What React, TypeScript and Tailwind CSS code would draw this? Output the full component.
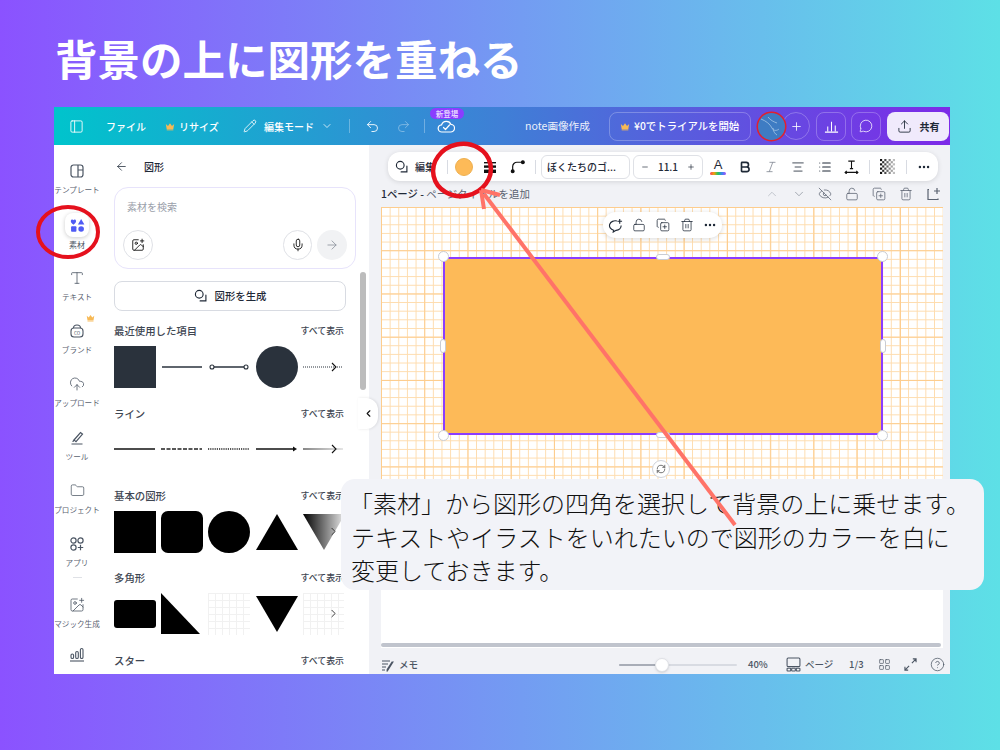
import React from "react";
import {
  PanelLeft, Pencil, ChevronDown, ChevronUp, ChevronLeft, ChevronRight, Undo2, Redo2, Plus, MessageCircle, Upload, ArrowLeft, ArrowRight,
  ImagePlus, Mic, Type, CloudUpload, Folder, Trash2, LockOpen, CopyPlus, Ellipsis, EyeOff, RefreshCw, AlignCenter, List, Bold, Italic,
  CircleHelp, LayoutGrid, Minus,
} from "lucide-react";

const Crown = ({ className = "" }: { className?: string }) => (
  <svg viewBox="0 0 12 10" className={className}>
    <path d="M1 2l2.6 2.4L6 1l2.4 3.4L11 2l-1 6H2z" fill="#f7b955" />
    <rect x="2" y="8.4" width="8" height="1.2" fill="#f7b955" />
  </svg>
);

const ShapeIcon = () => (
  <svg viewBox="0 0 16 16" className="w-[14px] h-[14px]" fill="none" stroke="#1f2937" strokeWidth="1.3">
    <circle cx="6" cy="6" r="4.4" />
    <path d="M13.6 7v6.6H7" strokeLinecap="round" />
  </svg>
);

const SideItem = ({ label, icon, crown }: { label: string; icon: React.ReactNode; crown?: boolean }) => (
  <div className="relative h-[53.3px] flex flex-col items-center justify-center">
    {crown && <Crown className="absolute w-[9px] h-[8px] top-[2px] left-[32px]" />}
    <div className="h-[20px] flex items-center justify-center text-[#4b5563]">{icon}</div>
    <div className="mt-[3px] text-[7.6px] leading-[12px] whitespace-nowrap text-[#5a6270]">{label}</div>
  </div>
);

const Section = ({ title, mt }: { title: string; mt: string }) => (
  <div className={`flex justify-between items-center h-[14px] w-[230px] ${mt}`}>
    <span className="text-[10.4px] font-medium text-[#3e4652]">{title}</span>
    <span className="text-[8.9px] font-medium text-[#3e4652] whitespace-nowrap">すべて表示</span>
  </div>
);

const Row = ({ children, chevron, mt }: { children: React.ReactNode; chevron?: boolean; mt: string }) => (
  <div className={`relative flex gap-[5.2px] w-[230px] h-[42px] overflow-hidden ${mt}`}>
    {children}
    {chevron && <ChevronRight className="absolute right-[4px] top-[14px] w-[13px] h-[13px] text-[#222]" strokeWidth={1.6} />}
  </div>
);

const Sample = ({ children }: { children: React.ReactNode }) => (
  <svg viewBox="0 0 42 42" className="w-[42px] h-[42px] shrink-0">{children}</svg>
);

const Faint = () => (
  <div className="w-[42px] h-[42px] shrink-0 bg-[linear-gradient(to_right,#f1f1f1_1px,transparent_1px),linear-gradient(#f1f1f1_1px,transparent_1px)] bg-[size:7px_7px]" />
);

const Sep = ({ ml }: { ml: string }) => <div className={`w-px h-[14px] bg-[#d8dbe2] shrink-0 ${ml}`} />;

const TB = ({ children, cls }: { children: React.ReactNode; cls: string }) => (
  <div className={`w-[20px] h-[20px] flex items-center justify-center shrink-0 text-[#1f2937] ${cls}`}>{children}</div>
);

const Handle = ({ cls }: { cls: string }) => (
  <div className={`absolute bg-white border border-[#c9ccd3] ${cls}`} />
);

export default function App() {
  const ic = "w-[14px] h-[14px]";
  const checker = [];
  for (let y = 0; y < 7; y++) for (let x = 0; x < 7; x++) if ((x + y) % 2 === 0) checker.push(
    <rect key={`${x}-${y}`} x={x * 2} y={y * 2} width="2" height="2" fill="#111" opacity={1 - x * 0.12} />
  );
  return (
    <div className="relative w-[1000px] h-[750px] overflow-hidden bg-[linear-gradient(90deg,#8b52ff_0%,#5de0e6_100%)] font-['Noto_Sans_CJK_JP','Noto_Sans',sans-serif]">
      <h1 className="pl-[55px] pt-[31px] h-[107px] text-[42.5px] leading-[54px] font-bold text-white whitespace-nowrap">背景の上に図形を重ねる</h1>

      <div className="ml-[54px] w-[896px] h-[567px] flex flex-col overflow-hidden bg-white">
        {/* header */}
        <header className="h-[38px] shrink-0 flex items-center text-white text-[10px] bg-[linear-gradient(90deg,#00c4cc_0%,#3f7fd6_50%,#7d2ae8_100%)]">
          <PanelLeft className="w-[15px] h-[15px] ml-[15px]" strokeWidth={1.4} />
          <span className="ml-[22px] w-[39px] font-medium whitespace-nowrap">ファイル</span>
          <Crown className="ml-[20px] w-[10px] h-[9px]" />
          <span className="ml-[4px] w-[41px] font-medium whitespace-nowrap">リサイズ</span>
          <Pencil className="ml-[23px] w-[14px] h-[14px]" strokeWidth={1.4} />
          <span className="ml-[7px] w-[51px] font-medium whitespace-nowrap">編集モード</span>
          <ChevronDown className="ml-[6px] w-[12px] h-[12px]" strokeWidth={1.5} />
          <div className="ml-[16px] w-px h-[14px] bg-white/30" />
          <Undo2 className="ml-[15px] w-[15px] h-[15px]" strokeWidth={1.4} />
          <Redo2 className="ml-[16px] w-[15px] h-[15px] opacity-40" strokeWidth={1.4} />
          <div className="ml-[13px] w-px h-[14px] bg-white/30" />
          <div className="relative ml-[12px] w-[18px] h-[18px]">
            <svg viewBox="0 0 18 18" className="w-[18px] h-[18px]" fill="none" stroke="#fff" strokeWidth="1.2">
              <path d="M5 15a3.6 3.6 0 0 1-.4-7.2A5 5 0 0 1 14 7.4 3.8 3.8 0 0 1 13.4 15z" />
              <path d="M6.5 10.5l2 2 4-4.5" strokeLinecap="round" strokeLinejoin="round" />
            </svg>
            <div className="absolute left-[-7px] top-[-9px] w-[34px] h-[11px] rounded-full bg-[#8b3dff] text-[7.5px] leading-[11px] text-center whitespace-nowrap">新登場</div>
          </div>
          <span className="ml-[70px] w-[66px] text-[10.6px] whitespace-nowrap opacity-90">note画像作成</span>
          <div className="ml-[18px] w-[142px] h-[29px] rounded-lg border border-white/25 flex items-center">
            <Crown className="ml-[10px] w-[10px] h-[9px]" />
            <span className="ml-[4px] text-[10.4px] font-medium whitespace-nowrap">¥0でトライアルを開始</span>
          </div>
          <div className="relative ml-[7px] w-[27px] h-[27px] rounded-full bg-[#3f7cc4] z-10 overflow-hidden ring-[1.5px] ring-[#e2202c]">
            <svg viewBox="0 0 27 27" className="w-full h-full" fill="none" stroke="#cfe4f5" strokeWidth="0.8" opacity="0.7">
              <path d="M3 6c5 2 9 5 11 9 1 3 5 3 7 1M10 4c2 3 6 5 9 6M15 15c0 3 2 6 4 7" />
            </svg>
          </div>
          <div className="ml-[-3px] w-[28px] h-[28px] rounded-full border border-white/25 flex items-center justify-center">
            <Plus className="w-[13px] h-[13px]" strokeWidth={1.5} />
          </div>
          <div className="ml-[6px] w-[30px] h-[29px] rounded-lg border border-white/25 flex items-center justify-center">
            <svg viewBox="0 0 16 16" className="w-[15px] h-[15px]" fill="none" stroke="#fff" strokeWidth="1.1"><path d="M1 14h14M4 13V8M8 13V3M12 13V7" /></svg>
          </div>
          <div className="ml-[5px] w-[30px] h-[29px] rounded-lg border border-white/25 flex items-center justify-center">
            <MessageCircle className="w-[14px] h-[14px]" strokeWidth={1.3} />
          </div>
          <div className="ml-[6px] w-[62px] h-[29px] rounded-lg bg-[#f0eafc] flex items-center justify-center text-[#1f2937]">
            <Upload className="w-[15px] h-[15px]" strokeWidth={1.4} />
            <span className="ml-[8px] text-[10px] font-bold whitespace-nowrap">共有</span>
          </div>
        </header>

        <div className="flex-1 flex min-h-0">
          {/* sidebar */}
          <aside className="w-[52px] shrink-0 bg-white overflow-hidden pt-[7px]">
            <div className="w-[46px]">
              <SideItem label="テンプレート" icon={<svg viewBox="0 0 16 16" className="w-[16px] h-[16px]" fill="none" stroke="#4b5563" strokeWidth="1.2"><rect x="2" y="2" width="12" height="12" rx="2.5" /><path d="M9 2v12M9 7h5" /></svg>} />
              <div className="relative h-[53.3px] flex flex-col items-center justify-center">
                <div className="w-[24px] h-[24px] rounded-lg bg-white shadow-[0_1px_4px_rgba(0,0,0,0.2)] flex items-center justify-center">
                  <svg viewBox="0 0 14 14" className="w-[15px] h-[15px]" fill="#4f5bf5">
                    <path d="M3.2 6.2C1 4.6.6 3.6.8 2.6 1 1.4 2.6 1 3.2 2.2 3.8 1 5.4 1.4 5.6 2.6c.2 1-.2 2-2.4 3.6z" />
                    <path d="M10.4 1l3 5h-6z" />
                    <rect x="1" y="7.8" width="5" height="5" rx="0.8" />
                    <circle cx="10.4" cy="10.3" r="2.6" />
                  </svg>
                </div>
                <div className="mt-[2px] text-[8px] leading-[11px] text-[#4b5563]">素材</div>
              </div>
              <SideItem label="テキスト" icon={<Type className="w-[16px] h-[16px]" strokeWidth={1.2} />} />
              <SideItem crown label="ブランド" icon={<svg viewBox="0 0 16 16" className="w-[16px] h-[16px]" fill="none" stroke="#4b5563" strokeWidth="1.1"><rect x="2" y="5" width="12" height="9" rx="3" /><path d="M4.5 5c0-2 1.5-3 3.5-3s3.5 1 3.5 3" /><text x="8" y="11.6" fontSize="4.6" textAnchor="middle" fill="#4b5563" stroke="none">CO</text></svg>} />
              <SideItem label="アップロード" icon={<CloudUpload className="w-[16px] h-[16px]" strokeWidth={1.2} />} />
              <SideItem label="ツール" icon={<svg viewBox="0 0 16 16" className="w-[16px] h-[16px]" fill="none" stroke="#4b5563" strokeWidth="1.2"><path d="M5 10l6.5-7.5 2 1.6L7 11.6z" /><path d="M2.5 14h11M4 12c0-1 1-2 2-2" /></svg>} />
              <SideItem label="プロジェクト" icon={<Folder className="w-[15px] h-[15px]" strokeWidth={1.2} />} />
              <SideItem label="アプリ" icon={<svg viewBox="0 0 16 16" className="w-[16px] h-[16px]" fill="none" stroke="#4b5563" strokeWidth="1.2"><circle cx="4.5" cy="4.5" r="2.6" /><circle cx="11.5" cy="4.5" r="2.6" /><circle cx="4.5" cy="11.5" r="2.6" /><path d="M11.5 8.8v5.4M8.8 11.5h5.4" /></svg>} />
              <div className="h-[1px] w-[9px] bg-[#dfe1e6] mx-auto mt-[-1px] mb-[7px]" />
              <SideItem label="マジック生成" icon={<ImagePlus className="w-[16px] h-[16px]" strokeWidth={1.2} />} />
              <div className="h-[40px] flex justify-center pt-[7px]">
                <svg viewBox="0 0 16 16" className="w-[16px] h-[16px]" fill="none" stroke="#4b5563" strokeWidth="1.1"><rect x="2" y="8" width="2.6" height="4.5" rx="1.3" /><rect x="6.7" y="5.5" width="2.6" height="7" rx="1.3" /><rect x="11.4" y="2.5" width="2.6" height="10" rx="1.3" /><path d="M1 15h14" /></svg>
              </div>
            </div>
          </aside>

          {/* panel */}
          <div className="relative w-[263px] shrink-0 bg-white overflow-hidden pl-[8px]">
            <div className="h-[42px] flex items-center text-[#1f2937]">
              <ArrowLeft className="ml-[1px] w-[13px] h-[13px]" strokeWidth={1.4} />
              <span className="ml-[16px] text-[10px] font-medium">図形</span>
            </div>
            <div className="w-[242px] h-[82px] rounded-[14px] border border-[#e7e3fb] flex flex-col px-[8px]">
              <div className="mt-[12px] ml-[4px] text-[10px] leading-[14px] text-[#9aa0aa]">素材を検索</div>
              <div className="mt-[16px] flex items-center">
                <div className="w-[30px] h-[30px] rounded-full border border-[#dfe1e6] flex items-center justify-center"><ImagePlus className={ic} strokeWidth={1.4} /></div>
                <div className="ml-[130px] w-[30px] h-[30px] rounded-full border border-[#dfe1e6] flex items-center justify-center"><Mic className={ic} strokeWidth={1.4} /></div>
                <div className="ml-[5px] w-[30px] h-[30px] rounded-full bg-[#f1f2f4] flex items-center justify-center"><ArrowRight className={`${ic} text-[#8b919c]`} strokeWidth={1.4} /></div>
              </div>
            </div>
            <div className="mt-[12px] w-[232px] h-[30px] rounded-lg border border-[#d8dbe2] flex items-center justify-center text-[10px] font-medium text-[#1f2937]">
              <ShapeIcon />
              <span className="ml-[7px] text-[10.4px]">図形を生成</span>
            </div>

            <Section title="最近使用した項目" mt="mt-[13px]" />
            <Row mt="mt-[8px]">
              <div className="w-[42px] h-[42px] shrink-0 bg-[#2a323c]" />
              <Sample><path d="M1 21h40" stroke="#2a323c" strokeWidth="1.3" /></Sample>
              <Sample><path d="M4 21h34" stroke="#2a323c" strokeWidth="1.3" /><circle cx="4" cy="21" r="2" fill="#fff" stroke="#2a323c" strokeWidth="1.1" /><circle cx="38" cy="21" r="2" fill="#fff" stroke="#2a323c" strokeWidth="1.1" /></Sample>
              <div className="w-[42px] h-[42px] shrink-0 rounded-full bg-[#2a323c]" />
              <Sample><path d="M0 21h40" stroke="#2a323c" strokeWidth="1.2" strokeDasharray="1 1" /><path d="M29 17l4 4-4 4" stroke="#111" fill="none" strokeWidth="1.1" /></Sample>
            </Row>

            <Section title="ライン" mt="mt-[19px]" />
            <Row mt="mt-[7px]">
              <Sample><path d="M0 21h41" stroke="#111" strokeWidth="1.3" /></Sample>
              <Sample><path d="M0 21h41" stroke="#222" strokeWidth="1.3" strokeDasharray="4 1.5" /></Sample>
              <Sample><path d="M0 21h41" stroke="#222" strokeWidth="1.3" strokeDasharray="1.2 1" /></Sample>
              <Sample><path d="M0 21h38" stroke="#111" strokeWidth="1.3" /><path d="M37 18.5l4 2.5-4 2.5z" fill="#111" /></Sample>
              <Sample><defs><linearGradient id="lg" gradientUnits="userSpaceOnUse" x1="0" y1="21" x2="40" y2="21"><stop offset="0" stopColor="#111" /><stop offset="1" stopColor="#ccc" /></linearGradient></defs><path d="M0 21h40" stroke="url(#lg)" strokeWidth="1.2" /><path d="M29 17l4 4-4 4" stroke="#111" fill="none" strokeWidth="1.1" /></Sample>
            </Row>

            <Section title="基本の図形" mt="mt-[19px]" />
            <Row chevron mt="mt-[8px]">
              <div className="w-[42px] h-[42px] shrink-0 bg-black" />
              <div className="w-[42px] h-[42px] shrink-0 bg-black rounded-[7px]" />
              <div className="w-[42px] h-[42px] shrink-0 bg-black rounded-full" />
              <Sample><path d="M21 3l21 36H0z" fill="#000" /></Sample>
              <Sample><defs><linearGradient id="fd"><stop offset="0" stopColor="#000" /><stop offset="1" stopColor="#000" stopOpacity="0.08" /></linearGradient></defs><path d="M0 3h42L21 39z" fill="url(#fd)" /></Sample>
            </Row>

            <Section title="多角形" mt="mt-[18px]" />
            <Row chevron mt="mt-[8px]">
              <div className="w-[42px] h-[28px] mt-[7px] shrink-0 bg-black rounded-[3px]" />
              <Sample><path d="M0 0l39 41H0z" fill="#000" /></Sample>
              <Faint />
              <Sample><path d="M0 3h42L21 39z" fill="#000" /></Sample>
              <Faint />
            </Row>

            <Section title="スター" mt="mt-[19px]" />

            <div className="absolute left-[254px] top-[127px] w-[6px] h-[118px] rounded-full bg-[#bcbcbc]" />
          </div>

          {/* canvas column */}
          <main className="relative flex-1 min-w-0 flex flex-col bg-[#f1f2f6]">
            <div className="ml-[19px] mt-[7px] w-[550px] h-[29px] shrink-0 rounded-xl bg-white shadow-[0_1px_5px_rgba(0,0,0,0.12)] flex items-center text-[#1f2937]">
              <div className="ml-[7px]"><ShapeIcon /></div>
              <span className="ml-[6px] w-[21px] text-[10px] font-medium whitespace-nowrap">編集</span>
              <Sep ml="ml-[11px]" />
              <div className="w-[32px] flex justify-center shrink-0"><div className="w-[18px] h-[18px] rounded-full bg-[#fdba58] border border-[#eeb050]" /></div>
              <TB cls="">
                <svg viewBox="0 0 14 14" className="w-[14px] h-[14px]" fill="#111"><rect x="1" y="2" width="12" height="1.4" /><rect x="1" y="5.4" width="12" height="2.4" /><rect x="1" y="9.6" width="12" height="3.4" /></svg>
              </TB>
              <TB cls="ml-[7px]">
                <svg viewBox="0 0 14 14" className="w-[15px] h-[15px]" fill="none" stroke="#111" strokeWidth="1.1"><path d="M2.5 11V7a4 4 0 0 1 4-4h5" /><circle cx="2.5" cy="11.5" r="1.3" fill="#111" /><circle cx="12" cy="3" r="1.3" fill="#111" /></svg>
              </TB>
              <Sep ml="ml-[8px]" />
              <div className="ml-[5px] w-[89px] h-[24px] shrink-0 rounded-md border border-[#dfe1e6] flex items-center pl-[5px] text-[10px] font-medium whitespace-nowrap">ぼくたちのゴ...</div>
              <div className="ml-[3px] w-[70px] h-[24px] shrink-0 rounded-md border border-[#dfe1e6] flex items-center justify-between px-[7px]">
                <Minus className="w-[8px] h-[8px]" strokeWidth={2} />
                <span className="text-[10px] font-medium">11.1</span>
                <Plus className="w-[8px] h-[8px]" strokeWidth={2} />
              </div>
              <TB cls="ml-[5px] relative">
                <div className="flex flex-col items-center">
                  <span className="text-[13px] leading-[13px] font-['Liberation_Sans']">A</span>
                  <div className="mt-[1px] w-[16px] h-[3px] rounded-full bg-[linear-gradient(90deg,#f43f5e,#f59e0b,#22c55e,#3b82f6,#a855f7)]" />
                </div>
              </TB>
              <TB cls="ml-[7px]"><Bold className={ic} strokeWidth={2.8} /></TB>
              <TB cls="ml-[6px]"><Italic className={`${ic} text-[#8b919c]`} strokeWidth={1.5} /></TB>
              <TB cls="ml-[7px]"><AlignCenter className={ic} strokeWidth={1.4} /></TB>
              <TB cls="ml-[7px]"><List className={ic} strokeWidth={1.8} /></TB>
              <TB cls="ml-[6px]">
                <svg viewBox="0 0 14 14" className="w-[15px] h-[15px]" fill="none" stroke="#111" strokeWidth="1"><path d="M4 2h6M7 2v7M5.5 9h3M1 12.5h12M2.5 11l-1.5 1.5L2.5 14M11.5 11l1.5 1.5L11.5 14" /></svg>
              </TB>
              <Sep ml="ml-[8px]" />
              <TB cls="ml-[7px]"><svg viewBox="0 0 14 14" className="w-[15px] h-[15px]">{checker}</svg></TB>
              <Sep ml="ml-[9px]" />
              <TB cls="ml-[7px]"><Ellipsis className={ic} strokeWidth={2.2} /></TB>
            </div>

            <div className="h-[26px] shrink-0 ml-[12px] mr-[10px] flex items-center text-[#5a6270]">
              <span className="text-[10.4px] whitespace-nowrap"><span className="font-medium text-[#1f2937]">1ページ - </span>ページタイトルを追加</span>
              <ChevronUp className={`${ic} ml-auto mr-[13px] text-[#b3b7bf]`} strokeWidth={1.3} />
              <ChevronDown className={`${ic} mr-[12px] text-[#8b919c]`} strokeWidth={1.3} />
              <EyeOff className={`${ic} mr-[13px]`} strokeWidth={1.3} />
              <LockOpen className={`${ic} mr-[13px]`} strokeWidth={1.3} />
              <CopyPlus className={`${ic} mr-[13px]`} strokeWidth={1.3} />
              <Trash2 className={`${ic} mr-[13px]`} strokeWidth={1.3} />
              <svg viewBox="0 0 14 14" className={ic} fill="none" stroke="#5a6270" strokeWidth="1.2"><path d="M3 2.5H2v10h10v-1M11 1v6M8 4h6" /></svg>
            </div>

            {/* page */}
            <div className="relative flex-1 min-h-0 ml-[12px] w-[562px] bg-white">
              <div className="h-[310px] bg-[linear-gradient(to_right,#fdcd8e_1px,transparent_1px),linear-gradient(#fdcd8e_1px,transparent_1px),linear-gradient(to_right,#fedcae_1px,transparent_1px),linear-gradient(#fedcae_1px,transparent_1px)] bg-[size:43.25px_43.25px,43.25px_43.25px,8.65px_8.65px,8.65px_8.65px]" />
              <div className="absolute left-[222px] top-[5px] w-[119px] h-[26px] rounded-full bg-white shadow-[0_1px_5px_rgba(0,0,0,0.15)] flex items-center justify-center gap-[9.6px] text-[#1f2937]">
                <svg viewBox="0 0 16 16" className="w-[15px] h-[15px]" fill="none" stroke="#1f2937" strokeWidth="1.2"><path d="M9.5 3.2A6 5 0 1 0 6 13l-.4 2 3-1.8A6 5 0 0 0 14 8M12.5 1v5M10 3.5h5" /></svg>
                <LockOpen className={ic} strokeWidth={1.3} />
                <CopyPlus className={ic} strokeWidth={1.3} />
                <Trash2 className={ic} strokeWidth={1.3} />
                <Ellipsis className={ic} strokeWidth={2.2} />
              </div>
              <div className="absolute left-[62px] top-[50px] w-[440px] h-[178px] bg-[#fdba58] border-2 border-[#8b3dff]" />
              <Handle cls="left-[57px] top-[44px] w-[11px] h-[11px] rounded-full" />
              <Handle cls="left-[496px] top-[44px] w-[11px] h-[11px] rounded-full" />
              <Handle cls="left-[57px] top-[223px] w-[11px] h-[11px] rounded-full" />
              <Handle cls="left-[496px] top-[223px] w-[11px] h-[11px] rounded-full" />
              <Handle cls="left-[275px] top-[47px] w-[14px] h-[6px] rounded-full" />
              <Handle cls="left-[275px] top-[225px] w-[14px] h-[6px] rounded-full" />
              <Handle cls="left-[59px] top-[132px] w-[6px] h-[14px] rounded-full" />
              <Handle cls="left-[499px] top-[132px] w-[6px] h-[14px] rounded-full" />
              <div className="absolute left-[271px] top-[253px] w-[18px] h-[18px] rounded-full bg-white border border-[#d0d3da] flex items-center justify-center">
                <RefreshCw className="w-[10px] h-[10px] text-[#333]" strokeWidth={1.6} />
              </div>
              <div className="absolute left-0 bottom-[1px] w-[560px] h-[4px] rounded-full bg-[#c0c4cd]" />
            </div>

            {/* footer */}
            <div className="h-[26px] shrink-0 pt-[7px] flex items-center text-[#4b5563] text-[9.5px]">
              <svg viewBox="0 0 14 14" className="ml-[12px] w-[14px] h-[14px]" fill="none" stroke="#4b5563" strokeWidth="1.1"><path d="M1 3h8M1 6h6M1 9h4M1 12h3M12 4l-5 8-1 1.5.2-2L11 4z" /></svg>
              <span className="ml-[4px] font-medium">メモ</span>
              <div className="relative ml-[201px] w-[118px] h-[2px] rounded-full bg-[#d8dbe2]">
                <div className="w-[43px] h-[2px] rounded-full bg-[#a8adb7]" />
                <div className="absolute left-[36px] top-[-6px] w-[14px] h-[14px] rounded-full bg-white border border-[#dfe1e6] shadow-sm" />
              </div>
              <span className="ml-[11px] w-[22px] font-medium">40%</span>
              <svg viewBox="0 0 14 14" className="ml-[16px] w-[15px] h-[15px]" fill="none" stroke="#4b5563" strokeWidth="1"><rect x="1" y="1" width="12" height="8" rx="1" /><rect x="1" y="10.5" width="3.4" height="2.6" rx="0.5" /><rect x="5.3" y="10.5" width="3.4" height="2.6" rx="0.5" /><rect x="9.6" y="10.5" width="3.4" height="2.6" rx="0.5" /></svg>
              <span className="ml-[4px] w-[30px] font-medium whitespace-nowrap">ページ</span>
              <span className="ml-[14px] w-[17px] font-medium">1/3</span>
              <LayoutGrid className="ml-[12px] w-[13px] h-[13px]" strokeWidth={1.3} />
              <svg viewBox="0 0 14 14" className="ml-[13px] w-[13px] h-[13px]" fill="none" stroke="#4b5563" strokeWidth="1.2"><path d="M8.5 5.5L13 1M9.5 1H13v3.5M5.5 8.5L1 13M1 9.5V13h3.5" /></svg>
              <CircleHelp className="ml-[13px] w-[15px] h-[15px]" strokeWidth={1.2} />
            </div>

            <div className="absolute left-[-11px] top-[253px] w-[20px] h-[31px] rounded-r-xl bg-white shadow-[1px_0_3px_rgba(0,0,0,0.1)] flex items-center justify-center">
              <ChevronLeft className="w-[11px] h-[11px] text-[#111]" strokeWidth={2.4} />
            </div>
          </main>
        </div>
      </div>

      {/* annotation callout */}
      <div className="absolute left-[341px] top-[479px] w-[643px] h-[111px] rounded-[14px] bg-[#f2f3f8] pl-[10px] pt-[7px] text-[24px] leading-[33.6px] font-light text-[#111] whitespace-nowrap">
        <div className="ml-[-2px]">「素材」から図形の四角を選択して背景の上に乗せます。</div>
        <div>テキストやイラストをいれたいので図形のカラーを白に</div>
        <div>変更しておきます。</div>
      </div>

      {/* annotation marks */}
      <svg viewBox="0 0 1000 750" className="absolute left-0 top-0 w-[1000px] h-[750px] pointer-events-none" fill="none">
        <ellipse cx="68" cy="232" rx="30" ry="25" stroke="#e5111d" strokeWidth="4" />
        <ellipse cx="462" cy="170" rx="29" ry="26" stroke="#e5111d" strokeWidth="4.5" transform="rotate(-12 462 170)" />
        <path d="M735 525L484 194" stroke="#ff7368" strokeWidth="4" />
        <path d="M481 190l3 19M481 190l19 5" stroke="#ff7368" strokeWidth="4" />
      </svg>
    </div>
  );
}
